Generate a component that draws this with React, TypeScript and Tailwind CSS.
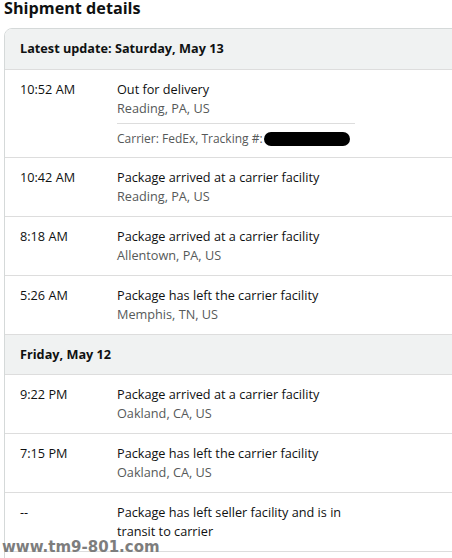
import React from "react";

type Ev = { time: string; title: string; loc?: string; carrier?: boolean };

const day1: Ev[] = [
  { time: "10:52 AM", title: "Out for delivery", loc: "Reading, PA, US", carrier: true },
  { time: "10:42 AM", title: "Package arrived at a carrier facility", loc: "Reading, PA, US" },
  { time: "8:18 AM", title: "Package arrived at a carrier facility", loc: "Allentown, PA, US" },
  { time: "5:26 AM", title: "Package has left the carrier facility", loc: "Memphis, TN, US" },
];
const day2: Ev[] = [
  { time: "9:22 PM", title: "Package arrived at a carrier facility", loc: "Oakland, CA, US" },
  { time: "7:15 PM", title: "Package has left the carrier facility", loc: "Oakland, CA, US" },
  { time: "--", title: "Package has left seller facility and is in transit to carrier" },
];

function Row({ e }: { e: Ev }) {
  return (
    <div className="flex border-t border-[#dddddd] pt-[10px] pb-[10px] text-[12.7px] leading-[19px] text-[#0f1111]">
      <div className="w-[112px] shrink-0 pl-[15px]">{e.time}</div>
      <div className="w-[236px]">
        <div>{e.title}</div>
        {e.loc && <div className="text-[#565959]">{e.loc}</div>}
        {e.carrier && (
          <div className="mt-[5px] w-[238px] border-t border-[#dddddd] pt-[6px] text-[12px] leading-[17px] text-[#565959] flex items-center">
            <span>Carrier: FedEx, Tracking #:</span>
            <span className="ml-[1px] inline-block h-[14px] w-[86px] rounded-[7px] bg-black" />
          </div>
        )}
      </div>
    </div>
  );
}

function Header({ text }: { text: string }) {
  return (
    <div className="flex h-[40px] items-center border-t border-[#dddddd] bg-[#f0f2f2] pl-[15px] text-[12.7px] font-bold text-[#0f1111] first:border-t-0">
      {text}
    </div>
  );
}

export default function App() {
  return (
    <div
      className="relative h-[558px] w-[452px] overflow-hidden bg-white"
      style={{ fontFamily: '"Open Sans", "Noto Sans", Arial, sans-serif' }}
    >
      <div className="-mt-[2px] h-[30px] pl-[4px] text-[16.2px] font-bold leading-[21px] text-[#0f1111]">
        Shipment details
      </div>
      <div className="ml-[4px] w-[470px] rounded-t-[8px] border border-[#d5d9d9] overflow-hidden">
        <Header text="Latest update: Saturday, May 13" />
        {day1.map((e, i) => (
          <Row key={i} e={e} />
        ))}
        <Header text="Friday, May 12" />
        {day2.map((e, i) => (
          <Row key={i} e={e} />
        ))}
        <div className="h-[20px] border-t border-[#dddddd]" />
      </div>
      <div
        className="absolute left-[2px] top-[538px] text-[15px] font-bold leading-[18px] text-[#7d7d7d]"
        style={{ fontFamily: '"DejaVu Sans", Verdana, sans-serif' }}
      >
        www.tm9-801.com
      </div>
    </div>
  );
}
